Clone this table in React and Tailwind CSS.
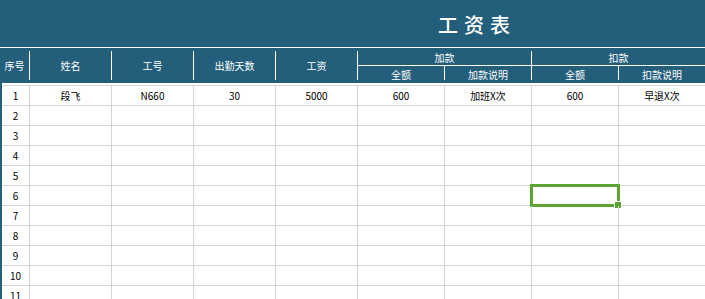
import React from 'react';

const widths = ['w-[28px]', 'w-[82px]', 'w-[82px]', 'w-[82px]', 'w-[82px]', 'w-[87px]', 'w-[87px]', 'w-[87px]', 'flex-1'];

const rows = [
  ['1', '段飞', 'N660', '30', '5000', '600', '加班X次', '600', '早退X次'],
  ...Array.from({ length: 10 }, (_, i) => [String(i + 2), '', '', '', '', '', '', '', '']),
];

const HeadCell = ({ w, children }) => (
  <div className={`${w} flex items-center justify-center`}>{children}</div>
);

const Sep = ({ h = 'h-[29px]', mt = 'mt-[3px]' }) => <div className={`w-px ${h} ${mt} bg-white self-start shrink-0`} />;

const App = () => {
  return (
    <div
      className="w-[705px] h-[299px] overflow-hidden bg-white text-[10px]"
      style={{ fontFamily: '"Noto Sans CJK SC", "Noto Sans", sans-serif' }}
    >
      {/* title band */}
      <div className="h-[47px] bg-[#235e7b] flex items-center pl-[438px] pt-[2px]">
        <span className="text-white text-[20px] font-medium tracking-[6px] leading-none">工资表</span>
      </div>
      <div className="h-px bg-white" />

      {/* header */}
      <div className="h-[35px] bg-[#235e7b] flex text-white">
        <HeadCell w="w-[29px]">序号</HeadCell>
        <Sep />
        <HeadCell w="w-[81px]">姓名</HeadCell>
        <Sep />
        <HeadCell w="w-[81px]">工号</HeadCell>
        <Sep />
        <HeadCell w="w-[81px]">出勤天数</HeadCell>
        <Sep />
        <HeadCell w="w-[81px]">工资</HeadCell>
        <Sep />
        <div className="flex-1 flex flex-col">
          <div className="h-[17px] flex">
            <div className="w-[173px] flex items-center justify-center pt-[2px]">加款</div>
            <Sep h="h-[14px]" />
            <div className="flex-1 flex items-center justify-center pt-[2px]">扣款</div>
          </div>
          <div className="h-px bg-white" />
          <div className="flex-1 flex">
            <HeadCell w="w-[86px]">全额</HeadCell>
            <Sep h="h-[14px]" mt="mt-0" />
            <HeadCell w="w-[86px]">加款说明</HeadCell>
            <Sep h="h-[14px]" mt="mt-0" />
            <HeadCell w="w-[86px]">全额</HeadCell>
            <Sep h="h-[14px]" mt="mt-0" />
            <HeadCell w="flex-1">扣款说明</HeadCell>
          </div>
        </div>
      </div>

      {/* body */}
      <div className="border-l-2 border-[#235e7b] pt-[2px]">
        <div className="border-t border-[#d4d4d4]">
          {rows.map((row, r) => (
            <div key={r} className="h-[20px] flex border-b border-[#d4d4d4] text-black">
              {row.map((val, c) => (
                <div
                  key={c}
                  className={`${widths[c]} ${c < 8 ? 'border-r border-[#d4d4d4]' : ''} relative flex items-center justify-center`}
                >
                  {val}
                  {r === 5 && c === 7 && (
                    <>
                      <div className="absolute left-[-2px] top-[-2px] w-[90px] h-[23px] border-[3px] border-[#5ca332]" />
                      <div className="absolute left-[82px] top-[15px] w-[8px] h-[8px] bg-[#5ca332] border border-white" />
                    </>
                  )}
                </div>
              ))}
            </div>
          ))}
        </div>
      </div>
    </div>
  );
};

export default App;
